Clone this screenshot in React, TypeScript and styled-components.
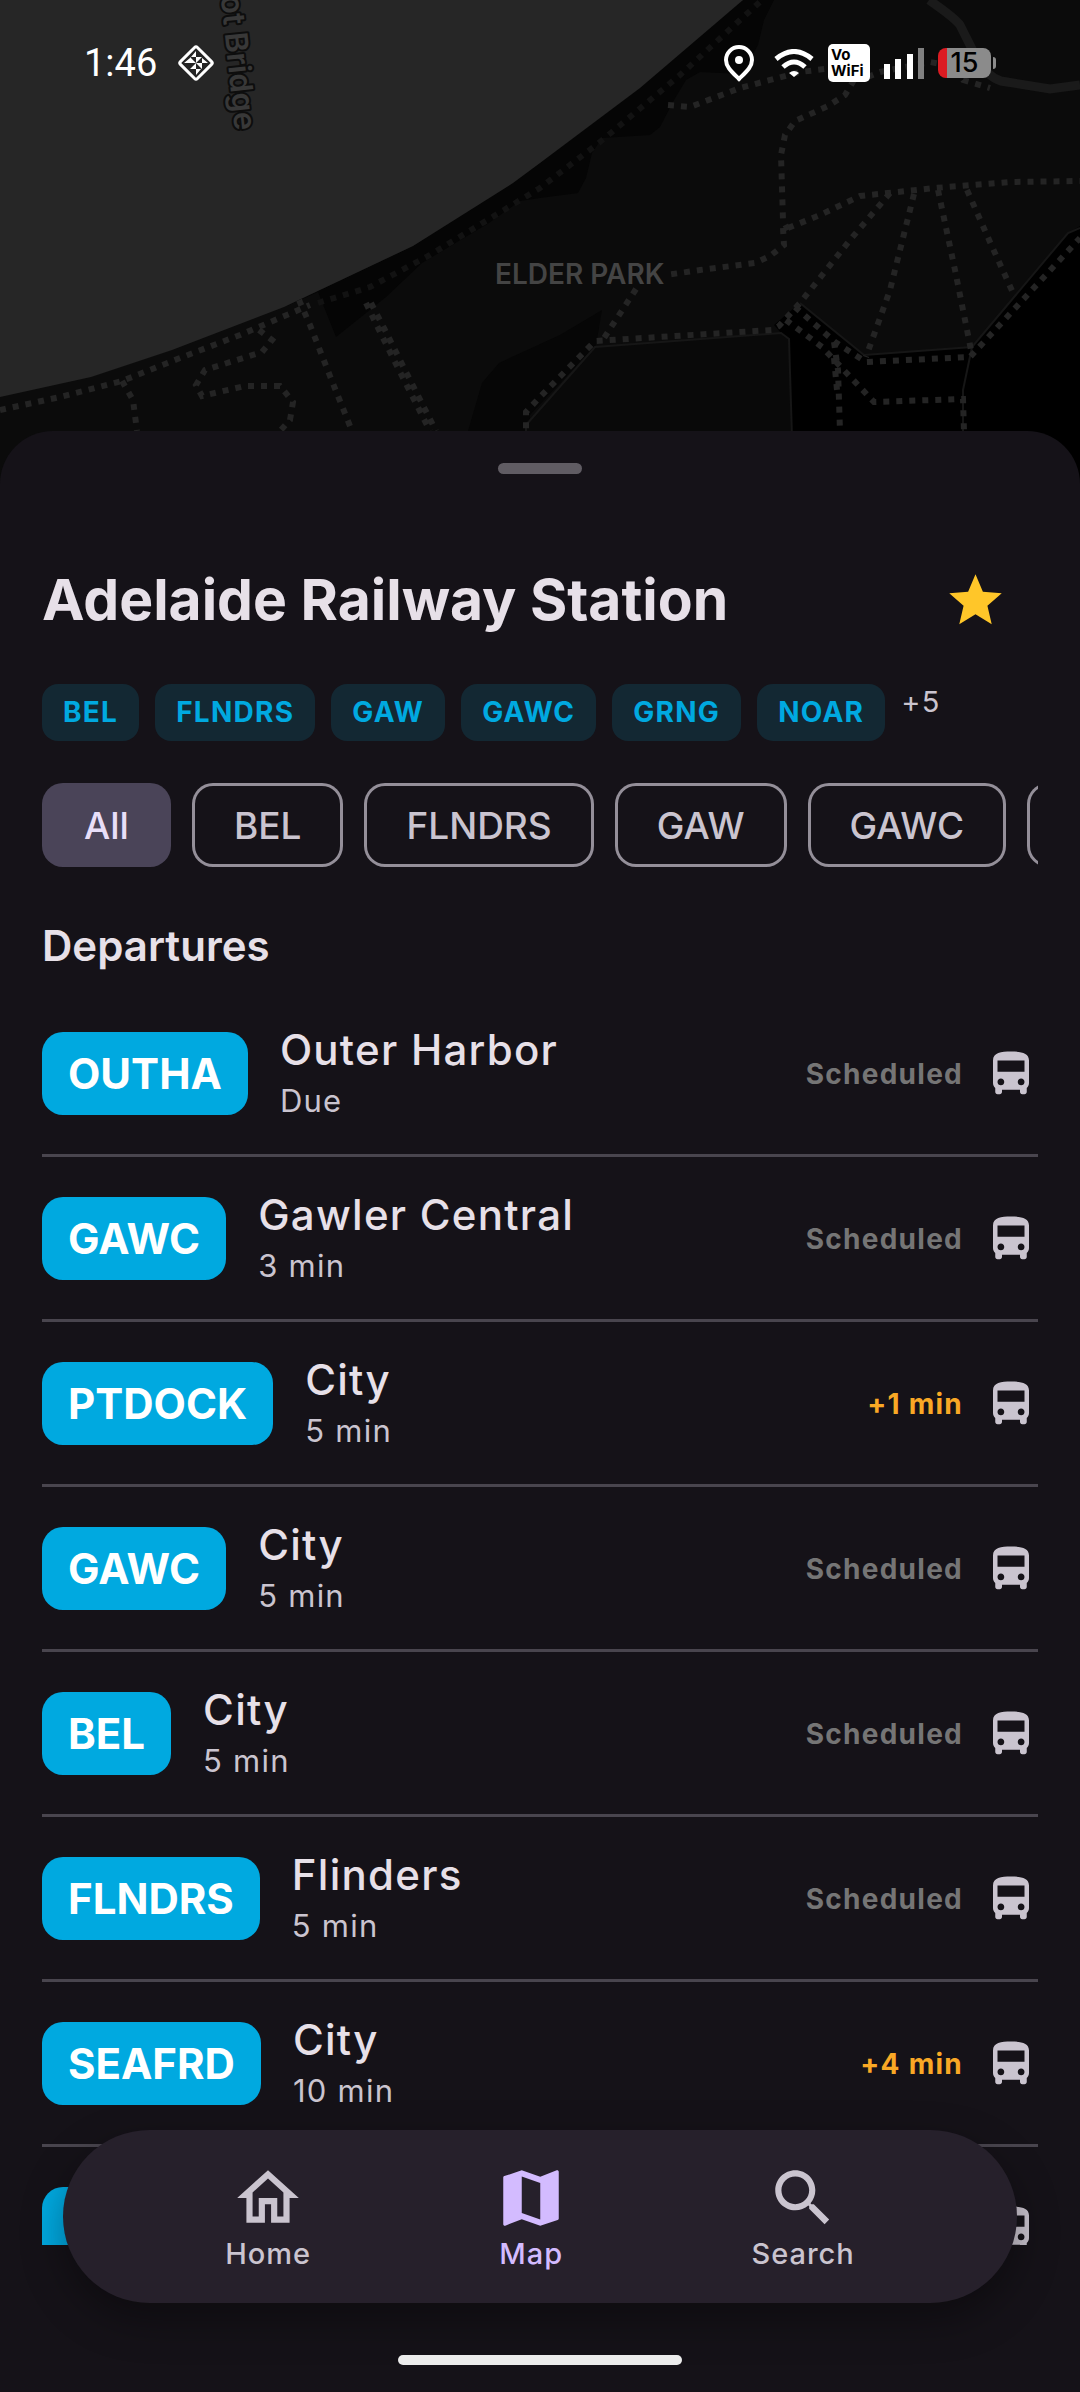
import React, { useState } from "react";
import styled, { createGlobalStyle } from "styled-components";

const color = {
  surface: "#151218",
  onSurface: "#e7e0e8",
  muted: "#cac4cf",
  outline: "#948f99",
  divider: "#49454e",
  selected: "#4a4458",
  onSelected: "#e8def8",
  line: "#00a9e0",
  lineTint: "#132833",
  late: "#f9a825",
  scheduled: "#757575",
  star: "#ffc629",
  nav: "#26202b",
  accent: "#d3bbff",
};

const GlobalStyle = createGlobalStyle`
  * { box-sizing: border-box; }
  body {
    margin: 0;
    background: ${color.surface};
    font-family: Inter, "Liberation Sans", sans-serif;
    color: ${color.onSurface};
  }
  button { font: inherit; color: inherit; background: none; border: 0; padding: 0; cursor: pointer; }
  h1, h2, h3, p, ul { margin: 0; padding: 0; }
  ul { list-style: none; }
  svg { display: block; flex: none; }
`;

const Screen = styled.div`
  position: relative;
  display: flex;
  flex-direction: column;
  height: 100vh;
  overflow: hidden;
`;

const MapArea = styled.div`
  position: absolute;
  inset: 0 0 auto;
  height: 505px;
  background: #0b0b0b;
  overflow: hidden;
`;

const MapDrawing = styled.svg`
  width: 100%;
  height: 100%;
`;

const StatusBar = styled.header`
  position: relative;
  flex: none;
  display: flex;
  align-items: center;
  justify-content: space-between;
  height: 126px;
  margin-bottom: 305px;
  padding: 0 84px;
  color: #fff;
`;

const StatusGroup = styled.div<{ $gap: number }>`
  display: flex;
  align-items: center;
  gap: ${(p) => p.$gap}px;
`;

const Clock = styled.time`
  font: 400 38px/44px Roboto, sans-serif;
`;

const VoWifi = styled.span`
  display: flex;
  flex-direction: column;
  justify-content: center;
  width: 42px;
  height: 38px;
  padding-left: 3px;
  border-radius: 5px;
  background: #fff;
  color: #000;
  font: 700 15px/16px Inter, sans-serif;
`;

const BatteryWrap = styled.span`
  display: flex;
  align-items: center;
  gap: 2px;
`;

const BatteryBody = styled.span`
  display: flex;
  align-items: center;
  justify-content: center;
  width: 53px;
  height: 30px;
  border-radius: 8px;
  background: linear-gradient(90deg, #dc1b22 9px, #8b8b8b 9px);
  color: #000;
  font: 500 27px/30px Inter, sans-serif;
`;

const BatteryTip = styled.span`
  width: 3px;
  height: 12px;
  border-radius: 0 3px 3px 0;
  background: #8b8b8b;
`;

const Sheet = styled.main`
  position: relative;
  flex: 1;
  min-height: 0;
  display: flex;
  flex-direction: column;
  padding: 0 42px 147px;
  border-radius: 53px 53px 0 0;
  background: ${color.surface};
`;

const Handle = styled.button`
  align-self: center;
  flex: none;
  width: 84px;
  height: 11px;
  margin: 32px 0 63px;
  border-radius: 6px;
  background: #605c63;
`;

const TitleRow = styled.div`
  display: flex;
  align-items: center;
  justify-content: space-between;
  height: 126px;
  flex: none;
`;

const Title = styled.h1`
  font-size: 57px;
  line-height: 74px;
  font-weight: 700;
`;

const StarButton = styled.button`
  display: grid;
  place-items: center;
  width: 126px;
  height: 126px;
  color: ${color.star};
`;

const LineTags = styled.ul`
  display: flex;
  align-items: flex-start;
  gap: 16px;
  margin-top: 21px;
`;

const LineTag = styled.li`
  padding: 0 21px;
  border-radius: 16px;
  background: ${color.lineTint};
  color: ${color.line};
  font-size: 28px;
  line-height: 57px;
  font-weight: 700;
  letter-spacing: 0.045em;
`;

const MoreLines = styled.li`
  color: ${color.muted};
  font-size: 29px;
  line-height: 36px;
  letter-spacing: 0.045em;
`;

const Filters = styled.div`
  display: flex;
  flex: none;
  gap: 21px;
  margin-top: 42px;
  overflow: hidden;
`;

const FilterChip = styled.button<{ $on: boolean }>`
  flex: none;
  height: 84px;
  padding: 0 42px;
  border-radius: 21px;
  background: ${(p) => (p.$on ? color.selected : "transparent")};
  box-shadow: inset 0 0 0 ${(p) => (p.$on ? 0 : 3)}px ${color.outline};
  color: ${(p) => (p.$on ? color.onSelected : color.muted)};
  font-size: 37px;
  font-weight: 500;
`;

const SectionTitle = styled.h2`
  margin: 48px 0 16px;
  font-size: 42px;
  line-height: 61px;
  font-weight: 600;
`;

const DepartureList = styled.ul`
  flex: 1;
  min-height: 0;
  overflow: hidden;
`;

const DepartureRow = styled.li`
  display: flex;
  align-items: center;
  height: 165px;
  padding-top: 1px;
  border-bottom: 3px solid ${color.divider};
`;

const RouteBadge = styled.span`
  padding: 0 26px;
  border-radius: 21px;
  background: ${color.line};
  color: #fff;
  font-size: 42px;
  line-height: 83px;
  font-weight: 700;
`;

const Trip = styled.div`
  flex: 1;
  margin-left: 32px;
`;

const Destination = styled.h3`
  font-size: 42px;
  line-height: 54px;
  font-weight: 500;
  letter-spacing: 0.03em;
`;

const Due = styled.p`
  color: ${color.muted};
  font-size: 31px;
  line-height: 47px;
  letter-spacing: 0.04em;
`;

const Status = styled.span<{ $late: boolean }>`
  margin-right: 21px;
  color: ${(p) => (p.$late ? color.late : color.scheduled)};
  font-size: 28px;
  line-height: 44px;
  font-weight: 700;
  letter-spacing: 0.045em;
`;

const Mode = styled.span`
  color: ${color.muted};
`;

const NavBar = styled.nav`
  position: absolute;
  left: 63px;
  right: 63px;
  bottom: 89px;
  display: flex;
  justify-content: space-evenly;
  height: 173px;
  padding-top: 31px;
  border-radius: 87px;
  background: ${color.nav};
  box-shadow: 0 16px 42px rgba(0, 0, 0, 0.36);
`;

const NavItem = styled.button<{ $on: boolean }>`
  display: flex;
  flex-direction: column;
  align-items: center;
  align-self: flex-start;
  padding: 0 21px;
  color: ${(p) => (p.$on ? color.accent : color.muted)};
  font-size: 29px;
  line-height: 38px;
  font-weight: 500;
  letter-spacing: 1px;
`;

const GestureBar = styled.div`
  position: absolute;
  bottom: 27px;
  left: 50%;
  width: 284px;
  height: 10px;
  margin-left: -142px;
  border-radius: 5px;
  background: #ececec;
`;

const Icon = ({ d, size }: { d: string; size: number }) => (
  <svg width={size} height={size} viewBox="0 0 24 24" fill="currentColor" aria-hidden="true">
    <path d={d} />
  </svg>
);

const icons = {
  star: "M12 17.27L18.18 21l-1.64-7.03L22 9.24l-7.19-.61L12 2 9.19 8.63 2 9.24l5.46 4.73L5.82 21z",
  bus: "M4 16c0 .88.39 1.67 1 2.22V20c0 .55.45 1 1 1h1c.55 0 1-.45 1-1v-1h8v1c0 .55.45 1 1 1h1c.55 0 1-.45 1-1v-1.78c.61-.55 1-1.34 1-2.22V6c0-3.5-3.58-4-8-4s-8 .5-8 4v10zm3.5 1c-.83 0-1.5-.67-1.5-1.5S6.67 14 7.5 14s1.5.67 1.5 1.5S8.33 17 7.5 17zm9 0c-.83 0-1.5-.67-1.5-1.5s.67-1.5 1.5-1.5 1.5.67 1.5 1.5-.67 1.5-1.5 1.5zM18 11H6V6h12v5z",
  home: "M12 5.69l5 4.5V18h-2v-6H9v6H7v-7.81l5-4.5M12 3L2 12h3v8h6v-6h2v6h6v-8h3L12 3z",
  map: "M20.5 3l-.16.03L15 5.1 9 3 3.36 4.9c-.21.07-.36.25-.36.48V20.5c0 .28.22.5.5.5l.16-.03L9 18.9l6 2.1 5.64-1.9c.21-.07.36-.25.36-.48V3.5c0-.28-.22-.5-.5-.5zM15 19l-6-2.11V5l6 2.11V19z",
  search: "M15.5 14h-.79l-.28-.27C15.41 12.59 16 11.11 16 9.5 16 5.91 13.09 3 9.5 3S3 5.91 3 9.5 5.91 16 9.5 16c1.61 0 3.09-.59 4.23-1.57l.27.28v.79l5 4.99L20.49 19l-4.99-5zm-6 0C7.01 14 5 11.99 5 9.5S7.01 5 9.5 5 14 7.01 14 9.5 11.99 14 9.5 14z",
};

const footpaths = [
  "M0 410 L60 397 L122 381 L180 358 L240 335 L310 305",
  "M122 381 L133 400 L137 431",
  "M259 330 L272 340 L262 352 L205 370 L196 385 L202 396 L245 386 L280 386 L293 402 L290 420 L280 431",
  "M299 300 L310 325 L330 376 L352 431",
  "M366 303 L380 332 L400 372 L430 431",
  "M371 303 L386 332 L406 372 L436 431",
  "M668 105 L690 107 L740 88 L800 72 L850 66 L870 76 L880 72 L930 62 L952 66 L963 80 L990 88",
  "M854 80 L845 95 L828 106 L795 121 L785 135 L781 155 L783 220 L788 230",
  "M783 228 L784 245 L770 256 L755 263 L700 270 L666 275",
  "M788 228 L820 215 L860 196 L935 188 L1010 182 L1080 181",
  "M890 193 L850 240 L800 303 L779 326 L772 330 L595 341 L540 397 L526 412 L526 431",
  "M636 289 L604 338",
  "M914 194 L890 290 L866 357",
  "M938 190 L955 270 L971 350",
  "M967 190 L990 242 L1014 295",
  "M795 307 L835 342 L866 362 L970 357 L1080 238",
  "M786 320 L822 347 L874 402 L963 399 L964 431",
  "M834 342 L838 370 L840 431",
  "M834 358 L837 390",
];

const TransitMap = () => (
  <MapDrawing viewBox="0 0 1080 505" preserveAspectRatio="xMidYMin slice" role="img" aria-label="Map of Elder Park">
    <rect width="1080" height="505" fill="#0b0b0b" />
    <path
      d="M284 307 L413 246 L540 163 L743 0 H774 L764 20 L758 45 L742 74 L700 72 L686 80 L674 100 L660 127 L650 135 L602 138 L592 153 L586 178 L578 193 L540 198 L520 201 L489 223 L422 263 L386 297 L336 337 L318 292 Z"
      fill="#050505"
    />
    <path d="M0 0 H743 L640 88 L540 163 L513 183 L413 246 L284 307 L172 350 L91 377 L0 397 Z" fill="#262626" />
    <path d="M468 505 V431 L482 383 L499 363 L560 335 L602 310 L596 345 L530 415 V505 Z" fill="#060606" />
    <path d="M774 325 L800 303 L864 355 L972 347 L1068 233 L1080 226 V505 H794 L789 339 L781 333 Z" fill="#000" />
    <path d="M526 425 L595 347 L781 333 L789 339 L794 505 H526 Z" fill="#090909" stroke="#161616" strokeWidth="2" />
    <path d="M800 303 L864 355 L972 347 L1068 233 L1080 228 M972 347 L963 390 V431" fill="none" stroke="#161616" strokeWidth="2" />
    <path
      d="M929 0 Q955 18 960 25 L976 57 Q986 76 1001 81 L1050 89 L1080 85"
      fill="none"
      stroke="#1a1a1a"
      strokeWidth="9"
    />
    <path
      d="M318 303 L370 287 L430 255 L540 188 L600 142 L680 75 L762 0"
      fill="none"
      stroke="#121212"
      strokeWidth="6"
      strokeDasharray="6 7"
    />
    {footpaths.map((d) => (
      <path key={d} d={d} fill="none" stroke="#242424" strokeWidth="6" strokeDasharray="6 7" />
    ))}
    <g fontFamily="Inter, sans-serif" fontWeight="600" paintOrder="stroke" strokeLinejoin="round">
      <text x="495" y="284" fontSize="28" fill="#444" stroke="#0b0b0b" strokeWidth="2">
        ELDER PARK
      </text>
      <text
        transform="translate(235 131) rotate(84)"
        textAnchor="end"
        fontSize="31"
        fill="#383838"
        stroke="#0d0d0d"
        strokeWidth="4"
      >
        ot Bridge
      </text>
    </g>
  </MapDrawing>
);

const DiamondIcon = () => (
  <svg width="38" height="38" viewBox="0 0 38 38" fill="#fff" aria-hidden="true">
    <rect x="7" y="7" width="24" height="24" rx="2" transform="rotate(45 19 19)" fill="none" stroke="#fff" strokeWidth="3" />
    <path d="M19 7 V13 H14 Z M31 19 H25 V14 Z M19 31 V25 H24 Z M7 19 H13 V14 Z" />
    <path d="M13 13 L19 19 H13 Z M19 13 H25 L19 19 Z M25 25 L19 19 H25 Z M19 25 H13 L19 19 Z" />
  </svg>
);

const PinIcon = () => (
  <svg width="30" height="37" viewBox="0 0 30 37" fill="none" stroke="#fff" strokeWidth="4" aria-hidden="true">
    <path d="M15 34 C8 27 2 22 2 15 A13 13 0 0 1 28 15 C28 22 22 27 15 34 Z" />
    <circle cx="15" cy="15" r="4" fill="#fff" stroke="none" />
  </svg>
);

const WifiIcon = () => (
  <svg width="40" height="29" viewBox="0 0 40 29" fill="none" stroke="#fff" strokeWidth="5" aria-hidden="true">
    <path d="M2 10 Q20 -5 38 10" />
    <path d="M9 18 Q20 8 31 18" />
    <path d="M15 24 Q20 20 25 24 L20 28 Z" fill="#fff" stroke="none" />
  </svg>
);

const SignalIcon = () => (
  <svg width="40" height="31" viewBox="0 0 40 31" fill="#fff" aria-hidden="true">
    <rect y="16" width="6" height="15" />
    <rect x="11" y="11" width="6" height="20" />
    <rect x="23" y="6" width="6" height="25" />
    <rect x="34" width="6" height="31" fill="#808080" />
  </svg>
);

const lines = ["BEL", "FLNDRS", "GAW", "GAWC", "GRNG", "NOAR"];
const filters = ["All", "BEL", "FLNDRS", "GAW", "GAWC", ""];

const departures = [
  { route: "OUTHA", to: "Outer Harbor", due: "Due", status: "Scheduled" },
  { route: "GAWC", to: "Gawler Central", due: "3 min", status: "Scheduled" },
  { route: "PTDOCK", to: "City", due: "5 min", status: "+1 min" },
  { route: "GAWC", to: "City", due: "5 min", status: "Scheduled" },
  { route: "BEL", to: "City", due: "5 min", status: "Scheduled" },
  { route: "FLNDRS", to: "Flinders", due: "5 min", status: "Scheduled" },
  { route: "SEAFRD", to: "City", due: "10 min", status: "+4 min" },
  { route: "", to: "", due: "", status: "" },
];

const tabs = [
  { label: "Home", icon: icons.home },
  { label: "Map", icon: icons.map },
  { label: "Search", icon: icons.search },
];

export default function App() {
  const [filter, setFilter] = useState("All");
  const [tab, setTab] = useState("Map");

  return (
    <Screen>
      <GlobalStyle />
      <MapArea>
        <TransitMap />
      </MapArea>
      <StatusBar>
        <StatusGroup $gap={20}>
          <Clock>1:46</Clock>
          <DiamondIcon />
        </StatusGroup>
        <StatusGroup $gap={14}>
          <StatusGroup $gap={20}>
            <PinIcon />
            <WifiIcon />
          </StatusGroup>
          <VoWifi>
            <span>Vo</span>
            <span>WiFi</span>
          </VoWifi>
          <SignalIcon />
          <BatteryWrap>
            <BatteryBody>15</BatteryBody>
            <BatteryTip />
          </BatteryWrap>
        </StatusGroup>
      </StatusBar>

      <Sheet>
        <Handle aria-label="Resize panel" />
        <TitleRow>
          <Title>Adelaide Railway Station</Title>
          <StarButton aria-label="Remove from favourites">
            <Icon d={icons.star} size={63} />
          </StarButton>
        </TitleRow>
        <LineTags>
          {lines.map((line) => (
            <LineTag key={line}>{line}</LineTag>
          ))}
          <MoreLines>+5</MoreLines>
        </LineTags>
        <Filters>
          {filters.map((name) => (
            <FilterChip key={name} $on={name === filter} aria-pressed={name === filter} onClick={() => setFilter(name)}>
              {name}
            </FilterChip>
          ))}
        </Filters>
        <SectionTitle>Departures</SectionTitle>
        <DepartureList>
          {departures.map((d, i) => (
            <DepartureRow key={i}>
              <RouteBadge>{d.route || "\u00a0"}</RouteBadge>
              <Trip>
                <Destination>{d.to}</Destination>
                <Due>{d.due}</Due>
              </Trip>
              <Status $late={d.status.startsWith("+")}>{d.status}</Status>
              <Mode>
                <Icon d={icons.bus} size={54} />
              </Mode>
            </DepartureRow>
          ))}
        </DepartureList>
      </Sheet>

      <NavBar aria-label="Main">
        {tabs.map((t) => (
          <NavItem key={t.label} $on={t.label === tab} onClick={() => setTab(t.label)}>
            <Icon d={t.icon} size={74} />
            {t.label}
          </NavItem>
        ))}
      </NavBar>
      <GestureBar />
    </Screen>
  );
}
